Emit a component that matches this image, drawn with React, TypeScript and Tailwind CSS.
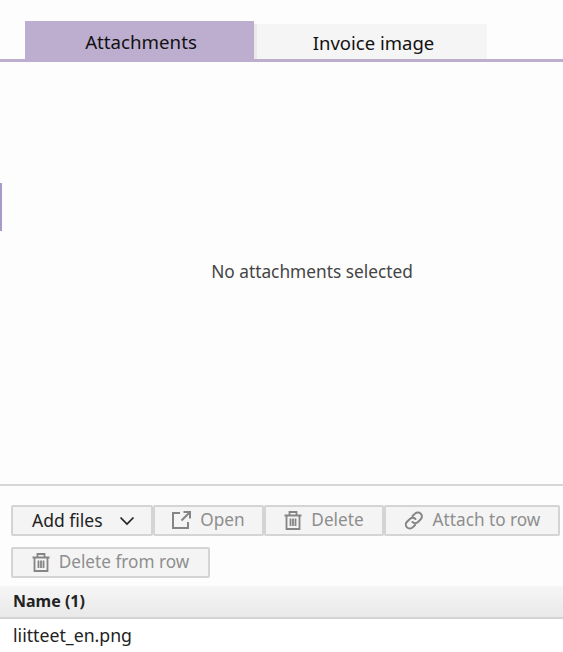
const font = { fontFamily: '"Noto Sans", "Open Sans", sans-serif' };

function OpenIcon() {
  return (
    <svg width="19" height="18" viewBox="0 0 19 18" fill="none" stroke="#858585" strokeWidth="2">
      <path d="M8 2H1v15h15v-6" />
      <path d="M11.5 1H18v6.5M18 1l-8.5 8.5" />
    </svg>
  );
}

function TrashIcon() {
  return (
    <svg width="18" height="19" viewBox="0 0 18 19" fill="none" stroke="#858585" strokeWidth="1.8">
      <path d="M0.5 4.5h17M5.5 4.5V1h7v3.5M2.5 4.5V18h13V4.5" />
      <path d="M6.5 7.5v7.5M9 7.5v7.5M11.5 7.5v7.5" />
    </svg>
  );
}

function LinkIcon() {
  return (
    <svg width="20" height="19" viewBox="0 0 20 19" fill="none" stroke="#858585" strokeWidth="2" strokeLinecap="round">
      <path d="M8.5 5 11 2.6a4 4 0 0 1 5.7 0 4 4 0 0 1 0 5.7L14 11a4 4 0 0 1-5.6 0" />
      <path d="M11.5 8a4 4 0 0 0-5.6 0L3 10.8a4 4 0 0 0 0 5.6 4 4 0 0 0 5.7 0l2.4-2.4" />
    </svg>
  );
}

function ToolButton({ icon, label, className }: { icon: React.ReactNode; label: string; className: string }) {
  return (
    <button
      type="button"
      className={`flex h-[31px] items-center justify-center gap-[9px] rounded-[2px] border-2 border-[#d4d4d4] bg-[#f4f4f4] pb-px text-[17.2px] text-[#8e8e8e] ${className}`}
    >
      {icon}
      <span>{label}</span>
    </button>
  );
}

export default function App() {
  return (
    <div className="relative flex h-[652px] w-[563px] flex-col overflow-hidden bg-[#fdfdfd]" style={font}>
      <div className="absolute left-0 top-[183px] h-12 w-0.5 bg-[#a99bc9]" />

      <div className="border-b-[3px] border-[#bdaed0] pl-[25px] pt-[21px]">
        <div className="flex h-[38px] items-end">
          <div className="flex h-[38px] w-[229px] items-center justify-center bg-[#bdaed0] pl-[3px] pt-1 text-[18.7px] text-[#111]">
            Attachments
          </div>
          <div className="flex h-[35px] w-[233px] items-center justify-center border-l-[3px] border-[#e9e9e9] bg-[#f5f5f5] pl-[3px] pt-0.5 text-[18.5px] text-[#111]">
            Invoice image
          </div>
        </div>
      </div>

      <div className="flex h-[424px] items-center justify-center border-b-2 border-[#d6d6d6] pb-[3px] pl-[61px] text-[17.3px] text-[#444]">
        No attachments selected
      </div>

      <div className="flex flex-col gap-[11px] pl-[11px] pt-[19px]">
        <div className="flex">
          <button
            type="button"
            className="flex h-[31px] w-[142px] items-center gap-[16px] rounded-[2px] border-2 border-[#d4d4d4] bg-[#f4f4f4] pl-[19px] text-[17.5px] text-[#222]"
          >
            <span>Add files</span>
            <svg width="16" height="10" viewBox="0 0 16 10" fill="none" stroke="#222" strokeWidth="1.7">
              <path d="M1.5 1.5 8 8l6.5-6.5" />
            </svg>
          </button>
          <ToolButton icon={<OpenIcon />} label="Open" className="w-[111px]" />
          <ToolButton icon={<TrashIcon />} label="Delete" className="w-[120px]" />
          <ToolButton icon={<LinkIcon />} label="Attach to row" className="w-[176px]" />
        </div>
        <div className="flex">
          <ToolButton icon={<TrashIcon />} label="Delete from row" className="w-[199px]" />
        </div>
      </div>

      <div className="mt-2 flex h-[33px] items-center border-b-2 border-[#d4d4d4] bg-gradient-to-b from-[#f6f6f6] to-[#e9e9e9] pb-px pl-[13px] text-[16px] font-bold text-[#222]">
        Name (1)
      </div>
      <div className="flex-1 bg-white pl-[13px] pt-[3px] text-[17.7px] text-[#222]">liitteet_en.png</div>
    </div>
  );
}
